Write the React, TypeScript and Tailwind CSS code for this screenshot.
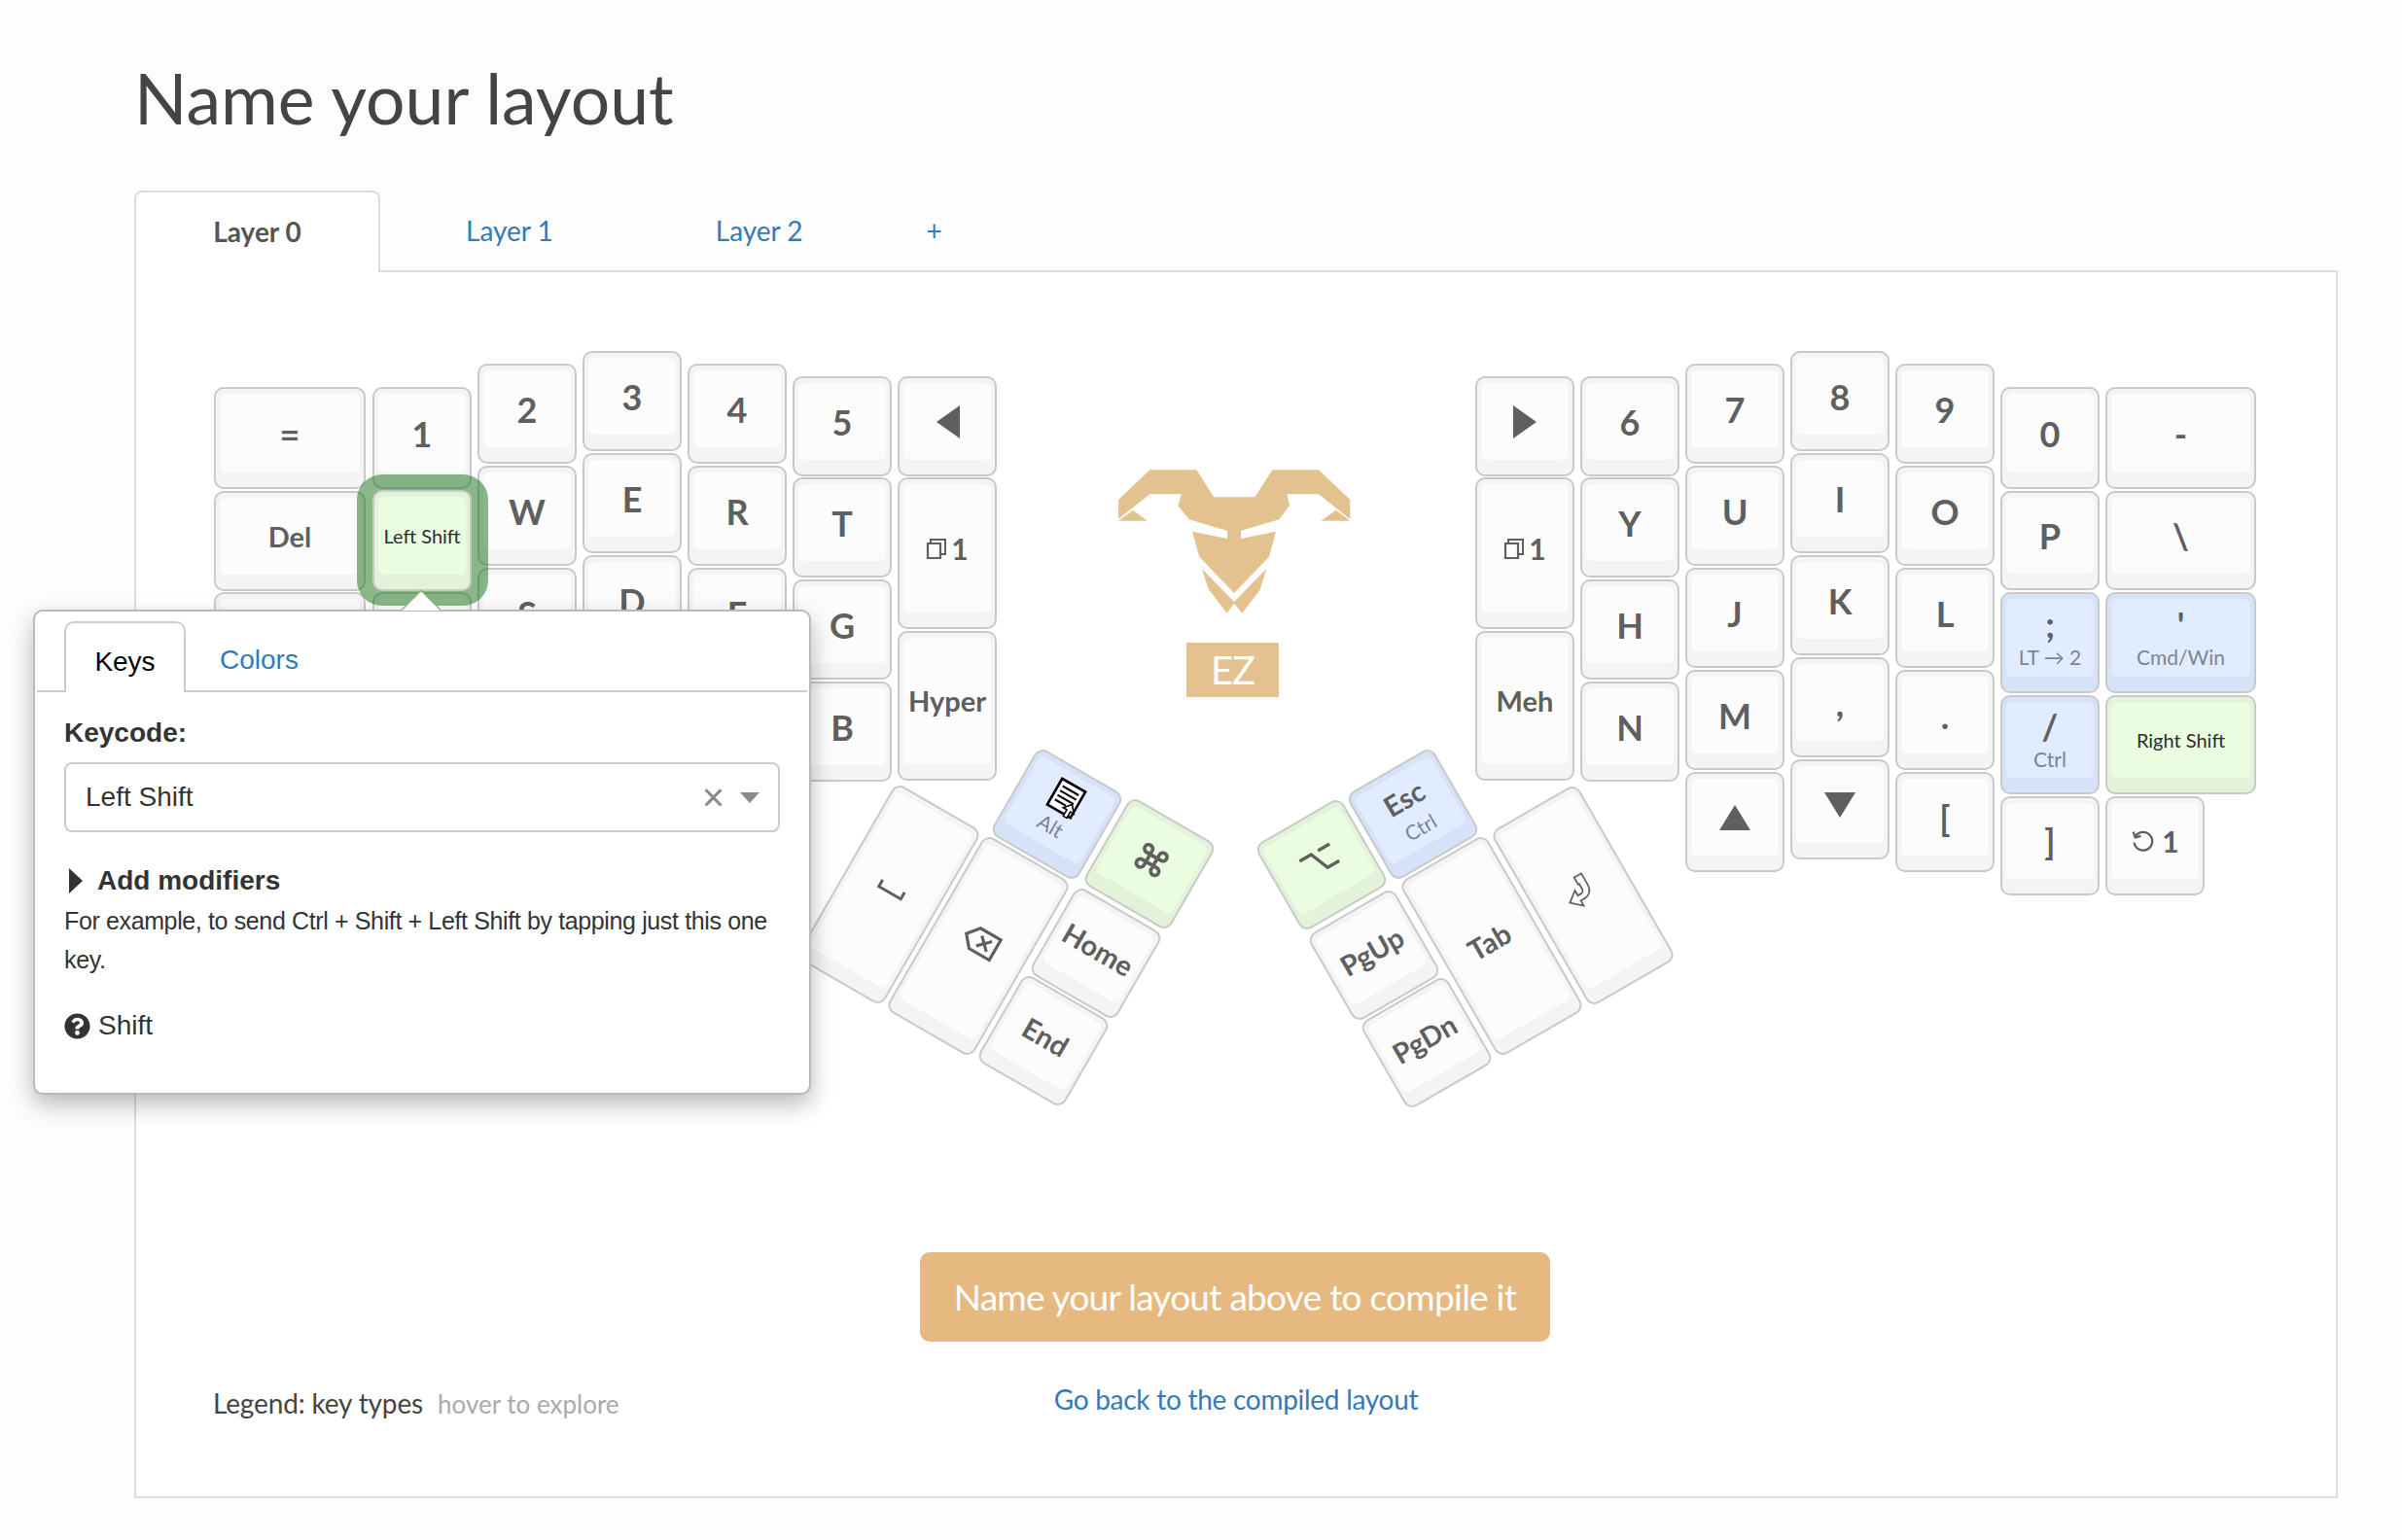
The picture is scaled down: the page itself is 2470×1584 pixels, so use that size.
import type { ReactNode } from 'react';
import { FaQuestionCircle } from 'react-icons/fa';

const ORIGIN_X = 140;
const ORIGIN_Y = 280;

type Tone = 'plain' | 'blue' | 'green';

type KeyDef = {
  x: number;
  y: number;
  w?: number;
  h?: number;
  label?: ReactNode;
  sub?: ReactNode;
  tone?: Tone;
  small?: boolean;
};

type ThumbDef = KeyDef & { rot: number };

const Tri = ({ dir }: { dir: 'left' | 'right' | 'up' | 'down' }) => {
  const points = {
    left: '25,0 25,34 1,17',
    right: '0,0 0,34 24,17',
    up: '0,26 32,26 16,0',
    down: '0,0 32,0 16,26',
  }[dir];
  const size = dir === 'left' || dir === 'right' ? 'w-[25px] h-[34px]' : 'w-[32px] h-[26px]';
  const view = dir === 'left' || dir === 'right' ? '0 0 25 34' : '0 0 32 26';
  return (
    <svg viewBox={view} className={size}>
      <polygon points={points} fill="#5f5f5f" />
    </svg>
  );
};

const LayerOne = () => (
  <span className="flex items-center gap-[4px] text-[30px]">
    <svg viewBox="0 0 22 22" className="w-[22px] h-[22px]">
      <path d="M2 6h13v15H2z" fill="none" stroke="#5f5f5f" strokeWidth="2.2" />
      <path d="M5 5V2h15v15h-4" fill="none" stroke="#5f5f5f" strokeWidth="2" />
    </svg>
    1
  </span>
);

const UndoOne = () => (
  <span className="flex items-center gap-[7px] text-[30px]">
    <svg viewBox="0 0 24 24" className="w-[25px] h-[25px]" fill="none" stroke="#5f5f5f" strokeWidth="2.2">
      <path d="M5 6.5A9 9 0 1 1 3.4 13" />
      <path d="M2.5 2.5l2 5.5 5.5-1.5" />
    </svg>
    1
  </span>
);

const leftKeys: KeyDef[] = [
  { x: 220, y: 398, w: 156, h: 105, label: '=' },
  { x: 383, y: 398, h: 105, label: '1' },
  { x: 491, y: 374, label: '2' },
  { x: 599, y: 361, label: '3' },
  { x: 707, y: 374, label: '4' },
  { x: 815, y: 387, label: '5' },
  { x: 923, y: 387, label: <Tri dir="left" /> },
  { x: 220, y: 505, w: 156, label: 'Del' },
  { x: 491, y: 479, label: 'W' },
  { x: 599, y: 466, label: 'E' },
  { x: 707, y: 479, label: 'R' },
  { x: 815, y: 491, label: 'T' },
  { x: 923, y: 491, h: 156, label: <LayerOne /> },
  { x: 220, y: 609, w: 156 },
  { x: 383, y: 609 },
  { x: 491, y: 584, label: 'S' },
  { x: 599, y: 571, label: 'D' },
  { x: 707, y: 584, label: 'F' },
  { x: 815, y: 596, label: 'G' },
  { x: 923, y: 649, h: 154, label: 'Hyper' },
  { x: 815, y: 701, label: 'B' },
];

const rightKeys: KeyDef[] = [
  { x: 1517, y: 387, label: <Tri dir="right" /> },
  { x: 1625, y: 387, label: '6' },
  { x: 1733, y: 374, label: '7' },
  { x: 1841, y: 361, label: '8' },
  { x: 1949, y: 374, label: '9' },
  { x: 2057, y: 398, h: 105, label: '0' },
  { x: 2165, y: 398, w: 155, h: 105, label: '-' },
  { x: 1517, y: 491, h: 156, label: <LayerOne /> },
  { x: 1625, y: 491, label: 'Y' },
  { x: 1733, y: 479, label: 'U' },
  { x: 1841, y: 466, label: 'I' },
  { x: 1949, y: 479, label: 'O' },
  { x: 2057, y: 505, h: 102, label: 'P' },
  { x: 2165, y: 505, w: 155, h: 102, label: '\\' },
  { x: 1517, y: 649, h: 154, label: 'Meh' },
  { x: 1625, y: 596, label: 'H' },
  { x: 1733, y: 584, label: 'J' },
  { x: 1841, y: 571, label: 'K' },
  { x: 1949, y: 584, label: 'L' },
  { x: 2057, y: 609, h: 104, label: ';', sub: 'LT → 2', tone: 'blue' },
  { x: 2165, y: 609, w: 155, h: 104, label: "'", sub: 'Cmd/Win', tone: 'blue' },
  { x: 1625, y: 701, label: 'N' },
  { x: 1733, y: 689, label: 'M' },
  { x: 1841, y: 676, label: ',' },
  { x: 1949, y: 689, label: '.' },
  { x: 2057, y: 715, h: 102, label: '/', sub: 'Ctrl', tone: 'blue' },
  { x: 2165, y: 715, w: 155, h: 102, label: 'Right Shift', tone: 'green', small: true },
  { x: 1733, y: 794, label: <Tri dir="up" /> },
  { x: 1841, y: 781, label: <Tri dir="down" /> },
  { x: 1949, y: 794, label: '[' },
  { x: 2057, y: 819, h: 102, label: ']' },
  { x: 2165, y: 819, h: 102, label: <UndoOne /> },
];

const SpaceIcon = () => (
  <svg viewBox="0 0 30 10" className="w-[30px] h-[10px]">
    <path d="M2 0v8h26V0" fill="none" stroke="#5f5f5f" strokeWidth="3" />
  </svg>
);

const BackspaceIcon = () => (
  <svg viewBox="0 0 38 28" className="w-[38px] h-[28px]" fill="none" stroke="#5f5f5f" strokeWidth="3.2">
    <path d="M2 14L12 2h24v24H12z" />
    <path d="M17 8l12 12M29 8L17 20" />
  </svg>
);

const MenuIcon = () => (
  <svg viewBox="0 0 34 34" className="w-[36px] h-[36px]">
    <rect x="4" y="2" width="26" height="29" fill="#fff" stroke="#000" strokeWidth="2.5" />
    <path d="M8 8h18M8 13h18M8 18h18M8 23h12" stroke="#000" strokeWidth="2" />
    <path d="M25 19l6 7h-4v7h-4v-7h-4z" fill="#fff" stroke="#000" strokeWidth="1.5" />
  </svg>
);

const CommandIcon = () => (
  <svg viewBox="0 0 24 24" className="w-[34px] h-[34px]" fill="none" stroke="#5f5f5f" strokeWidth="2.6">
    <path d="M15 6v12a3 3 0 1 0 3-3H6a3 3 0 1 0 3 3V6a3 3 0 1 0-3 3h12a3 3 0 1 0-3-3" />
  </svg>
);

const OptionIcon = () => (
  <svg viewBox="0 0 36 26" className="w-[36px] h-[26px]" fill="none" stroke="#5f5f5f" strokeWidth="3.4">
    <path d="M0 3h14l8 20h14M22 3h14" />
  </svg>
);

const EnterIcon = () => (
  <svg viewBox="0 0 30 30" className="w-[36px] h-[36px]" fill="#fff" stroke="#5f5f5f" strokeWidth="1.5">
    <path d="M16 2h7v12a8 8 0 0 1-8 8h-4v5L2 19l9-7v5h3a3 3 0 0 0 3-3V9h-1z" />
  </svg>
);

const thumbKeys: ThumbDef[] = [
  { x: 914, y: 920, h: 208, rot: 30, label: <SpaceIcon /> },
  { x: 1006, y: 973, h: 208, rot: 30, label: <BackspaceIcon /> },
  { x: 1087, y: 837, rot: 30, label: <MenuIcon />, sub: 'Alt', tone: 'blue' },
  { x: 1182, y: 888, rot: 30, label: <CommandIcon />, tone: 'green' },
  { x: 1127, y: 980, rot: 30, label: 'Home' },
  { x: 1073, y: 1070, rot: 30, label: 'End' },
  { x: 1453, y: 837, rot: -30, label: 'Esc', sub: 'Ctrl', tone: 'blue' },
  { x: 1359, y: 889, rot: -30, label: <OptionIcon />, tone: 'green' },
  { x: 1413, y: 982, rot: -30, label: 'PgUp' },
  { x: 1467, y: 1072, rot: -30, label: 'PgDn' },
  { x: 1534, y: 973, h: 208, rot: -30, label: 'Tab' },
  { x: 1628, y: 921, h: 208, rot: -30, label: <EnterIcon /> },
];

function KeyCap({ label, sub, tone = 'plain', small }: Omit<KeyDef, 'x' | 'y' | 'w' | 'h'>) {
  const outer =
    tone === 'blue' ? 'bg-[#d6e2f7]' : tone === 'green' ? 'bg-[#e2f3d9]' : 'bg-[#f4f4f4]';
  const inner =
    tone === 'blue' ? 'bg-[#e1ecfe]' : tone === 'green' ? 'bg-[#ebfde0]' : 'bg-[#fcfcfc]';
  const isWord = typeof label === 'string' && label.length > 1;
  return (
    <div className={`w-full h-full rounded-[10px] border-2 border-[#c9c9c9] px-[4px] pt-[5px] pb-[15px] ${outer}`}>
      <div className={`w-full h-full rounded-[6px] flex flex-col items-center justify-center ${inner}`}>
        {small ? (
          <span className="text-[20px] text-[#2e2e2e] whitespace-nowrap">{label}</span>
        ) : (
          <span
            className={`leading-[40px] font-bold text-[#5f5f5f] flex items-center justify-center whitespace-nowrap ${
              isWord ? 'text-[29px]' : 'text-[36px]'
            }`}
          >
            {label}
          </span>
        )}
        {sub && <span className="text-[21px] leading-[28px] text-[#7b8594] whitespace-nowrap">{sub}</span>}
      </div>
    </div>
  );
}

function FlatKey({ x, y, w = 102, h = 103, ...cap }: KeyDef) {
  return (
    <div className="absolute" style={{ left: x - ORIGIN_X, top: y - ORIGIN_Y, width: w, height: h }}>
      <KeyCap {...cap} />
    </div>
  );
}

function ThumbKey({ x, y, w = 102, h = 103, rot, ...cap }: ThumbDef) {
  return (
    <div
      className="absolute"
      style={{
        left: x - ORIGIN_X - w / 2,
        top: y - ORIGIN_Y - h / 2,
        width: w,
        height: h,
        transform: `rotate(${rot}deg)`,
      }}
    >
      <KeyCap {...cap} />
    </div>
  );
}

function Logo() {
  return (
    <div className="absolute left-[960px] top-[170px] w-[300px] flex flex-col items-center">
      <svg viewBox="0 0 900 600" className="w-[300px] h-[200px]">
        <path
          fill="#e4c290"
          d="M150 192L247 100H391L445 184H571L625 100H768L865 192V252L768 175H670L678 210L646 253L528 288V312L636 290L615 368L507 480L400 368L378 290L486 312V288L368 253L334 210L345 175H247L150 252Z"
        />
        <path fill="#e4c290" d="M150 257L195 224L240 257ZM775 257L822 224L865 257Z" />
        <path fill="#e4c290" d="M408 405L507 507L607 405L587 470L532 542L507 512L485 542L428 468Z" />
      </svg>
      <div className="mt-[11px] ml-[35px] w-[95px] h-[56px] bg-[#e4c290] flex items-center justify-center text-[40px] tracking-[-1px] text-white">
        EZ
      </div>
    </div>
  );
}

function KeyPopup() {
  return (
    <div className="absolute left-[-106px] top-[347px] w-[800px] h-[499px] z-30">
      {/* arrow */}
      <div className="absolute left-[377px] top-[-20px] w-[44px] h-[21px] overflow-hidden">
        <div className="absolute left-[7px] top-[6px] w-[30px] h-[30px] rotate-45 bg-white border border-[#6f9f6a]" />
      </div>
      <div className="w-full h-full rounded-[10px] border-2 border-[#b9b9b9] bg-white shadow-[0_10px_24px_rgba(0,0,0,0.28)] font-['Liberation_Sans',sans-serif] text-[#333] px-[30px]">
        <div className="flex items-end h-[83px] -mx-[28px] px-[28px] border-b-2 border-[#ccc]">
          <div className="h-[73px] w-[125px] -mb-[2px] pt-[8px] bg-white border-2 border-b-0 border-[#ccc] rounded-t-[10px] flex items-center justify-center text-[28px] text-black">
            Keys
          </div>
          <div className="h-[73px] ml-[35px] pt-[11px] flex items-center text-[28px] text-[#337ab7]">Colors</div>
        </div>
        <div className="mt-[22px] text-[28px] leading-[40px] font-bold">Keycode:</div>
        <div className="mt-[10px] h-[72px] rounded-[8px] border-2 border-[#ccc] flex items-center pl-[20px] pr-[19px] text-[28px]">
          <span className="flex-1">Left Shift</span>
          <span className="text-[40px] leading-[40px] text-[#8a8a8a] mr-[16px]">×</span>
          <span className="w-0 h-0 border-x-[10px] border-x-transparent border-t-[11px] border-t-[#8a8a8a]" />
        </div>
        <div className="mt-[30px] flex items-center text-[28px] leading-[40px] font-bold">
          <span className="w-0 h-0 border-y-[13px] border-y-transparent border-l-[14px] border-l-[#333] ml-[5px] mr-[15px]" />
          Add modifiers
        </div>
        <p className="mt-[1px] text-[25px] leading-[40px] tracking-[-0.37px]">
          For example, to send Ctrl + Shift + Left Shift by tapping just this one key.
        </p>
        <div className="mt-[28px] flex items-center text-[28px] leading-[40px]">
          <FaQuestionCircle className="w-[27px] h-[27px] mr-[8px] text-[#333]" />
          Shift
        </div>
      </div>
    </div>
  );
}

export default function App() {
  return (
    <div className="min-h-[1584px] w-[2470px] bg-[#fdfdfd] font-['Lato',sans-serif] pl-[138px] overflow-hidden">
      <h1 className="pt-[54px] h-[196px] text-[71.5px] leading-[92px] text-[#444]">Name your layout</h1>

      {/* layer tabs */}
      <div className="flex items-stretch h-[84px] text-[28px] w-[2266px] border-b-2 border-[#ddd] relative z-10">
        <div className="w-[253px] h-[84px] pb-[2px] bg-white border-2 border-b-0 border-[#ddd] rounded-t-[8px] flex items-center justify-center font-bold text-[#555]">
          Layer 0
        </div>
        <div className="ml-[88px] flex items-center text-[#337ab7]">Layer 1</div>
        <div className="ml-[167px] flex items-center text-[#337ab7]">Layer 2</div>
        <div className="ml-[127px] flex items-center text-[#337ab7]">+</div>
      </div>

      <div className="w-[2266px] h-[1261px] bg-white border-2 border-t-0 border-[#ddd] flex flex-col">
        <div className="relative h-[1008px]">
          {[...leftKeys, ...rightKeys].map((k, i) => (
            <FlatKey key={i} {...k} />
          ))}
          {thumbKeys.map((k, i) => (
            <ThumbKey key={i} {...k} />
          ))}
          <Logo />
          {/* selected key highlight */}
          <div className="absolute left-[227px] top-[208px] w-[135px] h-[135px] rounded-[26px] bg-[#157015]/50 z-10" />
          <div className="z-20 relative">
            <FlatKey x={383} y={504} h={104} label="Left Shift" tone="green" small />
          </div>
          <KeyPopup />
        </div>

        <div className="flex justify-center">
          <button className="w-[648px] h-[92px] -ml-[2px] rounded-[10px] bg-[#e5b97f] text-white text-[37px] tracking-[-0.75px]">
            Name your layout above to compile it
          </button>
        </div>
        <div className="relative mt-[42px] pl-[79px] flex items-baseline text-[28px]">
          <span className="text-[#444] tracking-[-0.15px]">Legend: key types</span>
          <span className="ml-[15px] text-[26px] text-[#aaa]">hover to explore</span>
          <a className="absolute left-0 right-0 top-[-4px] text-center text-[#337ab7] tracking-[-0.27px] pointer-events-none">
            Go back to the compiled layout
          </a>
        </div>
      </div>
    </div>
  );
}
